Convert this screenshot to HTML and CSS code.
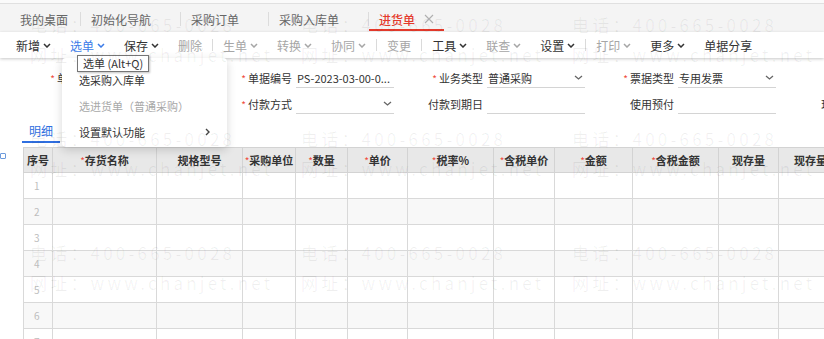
FILE: index.html
```html
<!DOCTYPE html>
<html lang="zh-CN">
<head>
<meta charset="utf-8">
<title>进货单</title>
<link rel="stylesheet" href="styles.css">
</head>
<body>
<div class="app">
  <div class="tabs">
    <div class="tab home">我的桌面</div>
    <span class="tab-sep"></span>
    <div class="tab">初始化导航<span class="tab-close"></span></div>
    <span class="tab-sep"></span>
    <div class="tab">采购订单<span class="tab-close"></span></div>
    <span class="tab-sep"></span>
    <div class="tab">采购入库单<span class="tab-close"></span></div>
    <span class="tab-sep"></span>
    <div class="tab active">进货单<span class="tab-close"><svg viewBox="0 0 10 10"><path d="M1 1L9 9M9 1L1 9"/></svg></span></div>
  </div>

  <div class="toolbar">
    <div class="btn">新增<svg class="chev" viewBox="0 0 8 5"><path d="M1 1l3 3 3-3"/></svg></div>
    <div class="btn primary">选单<svg class="chev" viewBox="0 0 8 5"><path d="M1 1l3 3 3-3"/></svg>
      <div class="menu">
        <div class="menu-item">选采购入库单</div>
        <div class="menu-item disabled">选进货单（普通采购）</div>
        <div class="menu-item">设置默认功能<svg class="arrow" viewBox="0 0 5 8"><path d="M1 1l3 3-3 3"/></svg></div>
      </div>
      <div class="tooltip">选单 (Alt+Q)</div>
    </div>
    <div class="btn">保存<svg class="chev" viewBox="0 0 8 5"><path d="M1 1l3 3 3-3"/></svg></div>
    <div class="btn disabled">删除</div>
    <span class="sep"></span>
    <div class="btn disabled">生单<svg class="chev" viewBox="0 0 8 5"><path d="M1 1l3 3 3-3"/></svg></div>
    <div class="btn disabled">转换<svg class="chev" viewBox="0 0 8 5"><path d="M1 1l3 3 3-3"/></svg></div>
    <div class="btn disabled">协同<svg class="chev" viewBox="0 0 8 5"><path d="M1 1l3 3 3-3"/></svg></div>
    <span class="sep"></span>
    <div class="btn disabled">变更</div>
    <span class="sep"></span>
    <div class="btn">工具<svg class="chev" viewBox="0 0 8 5"><path d="M1 1l3 3 3-3"/></svg></div>
    <div class="btn disabled">联查<svg class="chev" viewBox="0 0 8 5"><path d="M1 1l3 3 3-3"/></svg></div>
    <div class="btn">设置<svg class="chev" viewBox="0 0 8 5"><path d="M1 1l3 3 3-3"/></svg></div>
    <span class="sep"></span>
    <div class="btn disabled">打印<svg class="chev" viewBox="0 0 8 5"><path d="M1 1l3 3 3-3"/></svg></div>
    <div class="btn">更多<svg class="chev" viewBox="0 0 8 5"><path d="M1 1l3 3 3-3"/></svg></div>
    <div class="btn">单据分享</div>
  </div>

  <div class="form">
    <div class="form-row">
      <div class="field"><label><span class="req">*</span>单据日期</label><div class="input"></div></div>
      <div class="field"><label><span class="req">*</span>单据编号</label><div class="input">PS-2023-03-00-0...</div></div>
      <div class="field"><label><span class="req">*</span>业务类型</label><div class="input">普通采购<svg class="dd" viewBox="0 0 9 5"><path d="M1 1l3.5 3 3.5-3"/></svg></div></div>
      <div class="field"><label><span class="req">*</span>票据类型</label><div class="input">专用发票<svg class="dd" viewBox="0 0 9 5"><path d="M1 1l3.5 3 3.5-3"/></svg></div></div>
    </div>
    <div class="form-row">
      <div class="field"><label></label><div class="input blank"></div></div>
      <div class="field"><label><span class="req">*</span>付款方式</label><div class="input"><span></span><svg class="dd" viewBox="0 0 9 5"><path d="M1 1l3.5 3 3.5-3"/></svg></div></div>
      <div class="field"><label>付款到期日</label><div class="input"></div></div>
      <div class="field"><label>使用预付</label><div class="input"></div></div>
      <div class="field"><label>现结金额</label><div class="input"></div></div>
    </div>
  </div>

  <div class="detail-tabs"><span class="detail-tab">明细</span></div>

  <div class="grid">
    <div class="gutter"><span class="gutter-icon"></span></div>
    <table class="table">
      <colgroup>
        <col class="w29"><col class="w104"><col class="w86"><col class="w53"><col class="w52"><col class="w60">
        <col class="w86"><col class="w61"><col class="w78"><col class="w86"><col class="w60"><col class="w64"><col class="w60">
      </colgroup>
      <thead>
        <tr>
          <th>序号</th>
          <th><span class="star">*</span>存货名称</th>
          <th>规格型号</th>
          <th><span class="star">*</span>采购单位</th>
          <th><span class="star">*</span>数量</th>
          <th><span class="star">*</span>单价</th>
          <th><span class="star">*</span>税率%</th>
          <th><span class="star">*</span>含税单价</th>
          <th><span class="star">*</span>金额</th>
          <th><span class="star">*</span>含税金额</th>
          <th>现存量</th>
          <th>现存量</th>
          <th></th>
        </tr>
      </thead>
      <tbody>
        <tr><td class="no">1</td><td></td><td></td><td></td><td></td><td></td><td></td><td></td><td></td><td></td><td></td><td></td><td></td></tr>
        <tr><td class="no">2</td><td></td><td></td><td></td><td></td><td></td><td></td><td></td><td></td><td></td><td></td><td></td><td></td></tr>
        <tr><td class="no">3</td><td></td><td></td><td></td><td></td><td></td><td></td><td></td><td></td><td></td><td></td><td></td><td></td></tr>
        <tr><td class="no">4</td><td></td><td></td><td></td><td></td><td></td><td></td><td></td><td></td><td></td><td></td><td></td><td></td></tr>
        <tr><td class="no">5</td><td></td><td></td><td></td><td></td><td></td><td></td><td></td><td></td><td></td><td></td><td></td><td></td></tr>
        <tr><td class="no">6</td><td></td><td></td><td></td><td></td><td></td><td></td><td></td><td></td><td></td><td></td><td></td><td></td></tr>
        <tr><td class="no">7</td><td></td><td></td><td></td><td></td><td></td><td><span class="cell-icon"></span></td><td></td><td></td><td></td><td></td><td></td><td></td></tr>
      </tbody>
    </table>
  </div>

  <div class="watermark" aria-hidden="true">
    <div class="wm"><div>电话：400-665-0028</div><div>网址：www.chanjet.net</div></div>
    <div class="wm"><div>电话：400-665-0028</div><div>网址：www.chanjet.net</div></div>
    <div class="wm"><div>电话：400-665-0028</div><div>网址：www.chanjet.net</div></div>
    <div class="wm"><div>电话：400-665-0028</div><div>网址：www.chanjet.net</div></div>
    <div class="wm"><div>电话：400-665-0028</div><div>网址：www.chanjet.net</div></div>
    <div class="wm"><div>电话：400-665-0028</div><div>网址：www.chanjet.net</div></div>
    <div class="wm"><div>电话：400-665-0028</div><div>网址：www.chanjet.net</div></div>
    <div class="wm"><div>电话：400-665-0028</div><div>网址：www.chanjet.net</div></div>
    <div class="wm"><div>电话：400-665-0028</div><div>网址：www.chanjet.net</div></div>
  </div>
</div>
</body>
</html>
```

FILE: styles.css
```css
* { box-sizing: border-box; }
html, body { margin: 0; padding: 0; }
body {
  width: 824px;
  height: 339px;
  overflow: hidden;
  background: #fff;
  font-family: "Noto Sans CJK SC", "Noto Sans", sans-serif;
  color: #333;
}
.app {
  position: relative;
  width: 824px;
  height: 339px;
  overflow: hidden;
  background: #fafafa;
}

/* ---------- top tabs ---------- */
.tabs {
  margin-top: 3px;
  height: 29px;
  border-top: 1px solid #e0e0e0;
  background: #f4f4f4;
  display: flex;
  align-items: flex-end;
  font-size: 12px;
  color: #666;
}
.tab {
  height: 22px;
  margin-bottom: 1px;
  padding: 0 10px;
  display: flex;
  align-items: center;
  border-bottom: 2px solid transparent;
  white-space: nowrap;
}
.tab.home { padding: 0 12px 0 20px; }
.tab-close {
  width: 10px;
  height: 10px;
  margin-left: 9px;
  display: flex;
}
.tab-close svg { width: 10px; height: 10px; }
.tab-close path { stroke: #b0b0b0; stroke-width: 1.1; fill: none; }
.tab.active {
  color: #e53a2c;
  border-bottom-color: #e53a2c;
  font-weight: 500;
}
.tab-sep {
  align-self: center;
  width: 1px;
  height: 14px;
  background: #dcdcdc;
  margin-top: 2px;
}

/* ---------- toolbar ---------- */
.toolbar {
  position: relative;
  z-index: 10;
  height: 26px;
  padding-left: 16px;
  display: flex;
  align-items: center;
  background: #fff;
  font-size: 12px;
  box-shadow: 0 1px 3px rgba(0, 0, 0, 0.22);
}
.btn {
  position: relative;
  height: 26px;
  display: flex;
  align-items: center;
  white-space: nowrap;
  color: #333;
}
.btn + .btn { margin-left: 19px; }
.btn.primary { color: #3b7be8; }
.btn.disabled { color: #a6a6a6; }
.chev { width: 8px; height: 5px; margin-left: 3px; }
.chev path { fill: none; stroke: currentColor; stroke-width: 1.5; }
.sep {
  width: 1px;
  height: 12px;
  margin: 0 10px;
  background: #dadada;
}

/* dropdown menu */
.menu {
  position: absolute;
  left: -8px;
  top: 26px;
  width: 165px;
  padding: 9px 0 2px;
  background: #fff;
  border-radius: 4px;
  box-shadow: 0 3px 10px rgba(0, 0, 0, 0.16);
  font-size: 11px;
  color: #333;
  z-index: 20;
}
.menu-item {
  height: 26px;
  padding: 0 17px;
  display: flex;
  align-items: center;
  justify-content: space-between;
}
.menu-item.disabled { color: #a8a8a8; }
.arrow { width: 5px; height: 8px; }
.arrow path { fill: none; stroke: #444; stroke-width: 1.4; }

.tooltip {
  position: absolute;
  left: 7px;
  top: 23px;
  height: 17px;
  padding: 0 5px;
  border: 1px solid #767676;
  background: #fff;
  color: #333;
  font-size: 11px;
  line-height: 15px;
  white-space: nowrap;
  box-shadow: 1px 1px 2px rgba(0, 0, 0, 0.25);
  z-index: 30;
}

/* ---------- form ---------- */
.form {
  padding: 7px 0 0 44px;
  background: #fff;
}
.form-row {
  height: 26px;
  display: flex;
  align-items: center;
}
.field {
  width: 191px;
  flex-shrink: 0;
  display: flex;
  align-items: center;
  font-size: 11px;
}
.field label {
  width: 57px;
  text-align: right;
  white-space: nowrap;
  color: #333;
}
.req {
  color: #f04b3c;
  font-size: 10px;
  margin-right: 2px;
}
.input {
  width: 98px;
  height: 20px;
  margin-left: 4px;
  padding: 0 2px 0 1px;
  border-bottom: 1px solid #d4d4d4;
  display: flex;
  align-items: center;
  justify-content: space-between;
  white-space: nowrap;
  color: #333;
}
.dd { width: 9px; height: 5px; }
.dd path { fill: none; stroke: #666; stroke-width: 1.3; }

/* ---------- detail tab ---------- */
.detail-tabs {
  padding-left: 22px;
  height: 22px;
  background: #fff;
}
.detail-tab {
  display: inline-block;
  height: 22px;
  padding: 0 7px;
  line-height: 20px;
  font-size: 12px;
  color: #2f6fe0;
  border-bottom: 2px solid #2f6fe0;
}

/* ---------- grid ---------- */
.grid {
  display: flex;
  padding-top: 8px;
  background: #fff;
  height: 200px;
}
.gutter { width: 23px; flex-shrink: 0; }
.gutter-icon {
  display: block;
  width: 6px;
  height: 6px;
  margin-top: 6px;
  border: 1px solid #6d9bdc;
  border-radius: 1px;
}
.table {
  flex-shrink: 0;
  width: 879px;
  border-collapse: collapse;
  table-layout: fixed;
  font-size: 11px;
}
.w29 { width: 29px; } .w104 { width: 104px; } .w86 { width: 86px; } .w53 { width: 53px; }
.w52 { width: 52px; } .w60 { width: 60px; } .w61 { width: 61px; } .w78 { width: 78px; } .w64 { width: 64px; }
.table th {
  height: 25px;
  padding: 0;
  background: #e8e8e8;
  border: 1px solid #d3d3d3;
  font-weight: bold;
  color: #333;
  text-align: center;
  white-space: nowrap;
  overflow: hidden;
}
.star {
  color: #f04b3c;
  font-weight: normal;
  font-size: 10px;
}
.table td {
  height: 26px;
  padding: 0;
  border: 1px solid #d9d9d9;
  background: #fff;
}
.table tbody tr:nth-child(even) td { background: #f8f8f8; }
.table td.no {
  padding-left: 10px;
  font-size: 10px;
  color: #bdbdbd;
}
.cell-icon {
  display: inline-block;
  width: 8px;
  height: 8px;
  margin-left: 3px;
  border: 1px solid #8a9cb0;
  border-radius: 1px;
}

/* ---------- watermark ---------- */
.watermark {
  position: absolute;
  top: 0;
  left: 0;
  right: 0;
  bottom: 0;
  z-index: 50;
  pointer-events: none;
  display: grid;
  grid-template-columns: repeat(3, 271px);
  grid-auto-rows: 114px;
  padding: 10px 0 0 30px;
}
.wm {
  font-size: 17px;
  line-height: 30px;
  letter-spacing: 3.2px;
  color: rgba(0, 0, 0, 0.06);
  white-space: nowrap;
}
```
